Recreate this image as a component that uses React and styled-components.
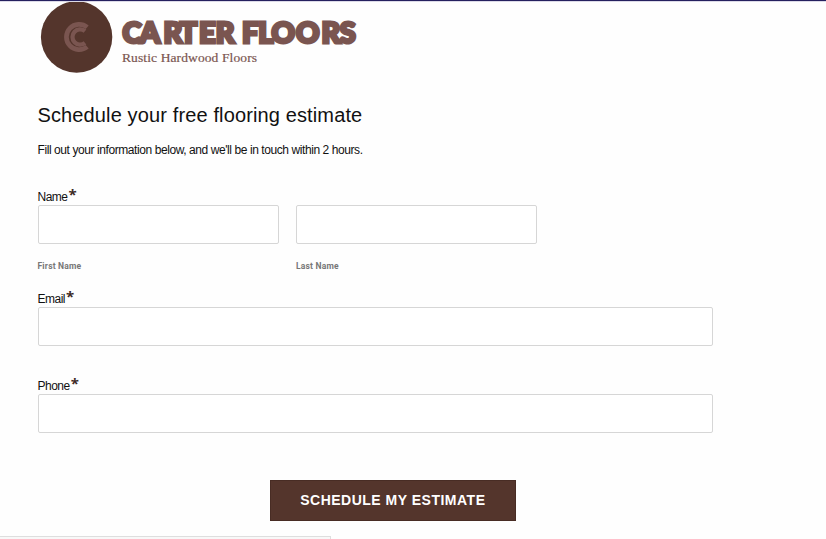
import React from "react";
import styled, { createGlobalStyle } from "styled-components";

const GlobalStyle = createGlobalStyle`
  * { box-sizing: border-box; }
  body { margin: 0; background: #fefefe; font-family: "Liberation Sans", Arial, sans-serif; }
`;

const Page = styled.div`
  height: 539px;
  display: flex;
  flex-direction: column;
  overflow: hidden;
  background: #fefefe;
  color: #111;
`;

const TopBar = styled.div`
  flex: none;
  height: 2px;
  background: #dcdae8;
  border-top: 1px solid #25205f;
`;

const Logo = styled.svg`
  flex: none;
  display: block;
  width: 330px;
  height: 74px;
  margin-left: 38px;
`;

const Form = styled.form`
  width: 675.6px;
  margin-left: 37.5px;
  display: flex;
  flex-direction: column;
`;

const Title = styled.h1`
  margin: 26px 0 0;
  font-size: 20px;
  line-height: 26px;
  font-weight: 400;
  letter-spacing: 0.13px;
  white-space: nowrap;
`;

const Intro = styled.p`
  margin: 14px 0 0;
  font-size: 12px;
  line-height: 16px;
  letter-spacing: -0.42px;
  white-space: nowrap;
`;

const Field = styled.div`
  margin-top: ${(p) => p.$gap}px;
`;

const Label = styled.label`
  display: flex;
  height: 16px;
  font-size: 12px;
  line-height: 16px;
  letter-spacing: -0.5px;
`;

const Required = styled.span`
  margin: -4px 0 0 1px;
  color: #3d2a26;
  font: 700 15px/18px "Open Sans", sans-serif;
`;

const Row = styled.div`
  display: grid;
  grid-template-columns: 241.4px 241.4px;
  column-gap: 17.1px;
`;

const Input = styled.input`
  display: block;
  width: 100%;
  height: 39px;
  padding: 0 10px;
  border: 1px solid #d6d6d6;
  border-radius: 2px;
  background: #fff;
  outline: none;
`;

const Hint = styled.div`
  margin-top: 15px;
  font: 700 8.5px/14px Roboto, sans-serif;
  letter-spacing: 0.2px;
  color: #777;
`;

const Submit = styled.button`
  align-self: flex-start;
  width: 246.5px;
  height: 41px;
  margin: 47px 0 0 232.1px;
  padding: 0 0 2px;
  border: 1px solid #482c24;
  background: #54352c;
  color: #fff;
  font: 700 14px "Liberation Sans", Arial, sans-serif;
  letter-spacing: 0.5px;
  white-space: nowrap;
`;

const StatusBar = styled.div`
  flex: none;
  width: 331px;
  height: 4px;
  margin-top: 15px;
  border: 1px solid #dedede;
  border-width: 1px 1px 0 0;
  background: #f8f8f8;
`;

const Wordmark = styled.text`
  font: 900 27.5px Lato, sans-serif;
  fill: #7a5550;
  stroke: #7a5550;
  stroke-width: 3px;
`;

const Tagline = styled.text`
  font: 400 13.5px "Liberation Serif", serif;
  fill: #7a5550;
  stroke: #7a5550;
  stroke-width: 0.2px;
`;

function CarterLogo() {
  return (
    <Logo viewBox="38 2 330 74" role="img" aria-label="Carter Floors">
      <circle cx="76.6" cy="37" r="35.7" fill="#54352c" />
      <g fill="none" stroke="#7a5550">
        <path d="M87.2 27.2A12.7 12.7 0 1 0 87.2 46.8" strokeWidth="4.7" />
        <path d="M85 31.2A7.6 7.6 0 1 0 85 42.8" strokeWidth="4.2" />
      </g>
      <Wordmark
        transform="translate(122 0) scale(1.05 1)"
        y="43.3"
        x="0.4 16.8 39.6 55 73.3 89.3 114.3 129.8 142.3 165.8 190 207.3"
      >
        CARTERFLOORS
      </Wordmark>
      <Tagline x="122" y="62" textLength="135">Rustic Hardwood Floors</Tagline>
    </Logo>
  );
}

function RequiredLabel({ htmlFor, children }) {
  return (
    <Label htmlFor={htmlFor}>
      {children}
      <Required>*</Required>
    </Label>
  );
}

export default function App() {
  return (
    <Page>
      <GlobalStyle />
      <TopBar />
      <CarterLogo />
      <Form onSubmit={(e) => e.preventDefault()}>
        <Title>Schedule your free flooring estimate</Title>
        <Intro>Fill out your information below, and we'll be in touch within 2 hours.</Intro>
        <Field $gap={31}>
          <RequiredLabel htmlFor="first">Name</RequiredLabel>
          <Row>
            <div>
              <Input id="first" />
              <Hint>First Name</Hint>
            </div>
            <div>
              <Input id="last" />
              <Hint>Last Name</Hint>
            </div>
          </Row>
        </Field>
        <Field $gap={18}>
          <RequiredLabel htmlFor="email">Email</RequiredLabel>
          <Input id="email" />
        </Field>
        <Field $gap={32}>
          <RequiredLabel htmlFor="phone">Phone</RequiredLabel>
          <Input id="phone" />
        </Field>
        <Submit>SCHEDULE MY ESTIMATE</Submit>
      </Form>
      <StatusBar />
    </Page>
  );
}
